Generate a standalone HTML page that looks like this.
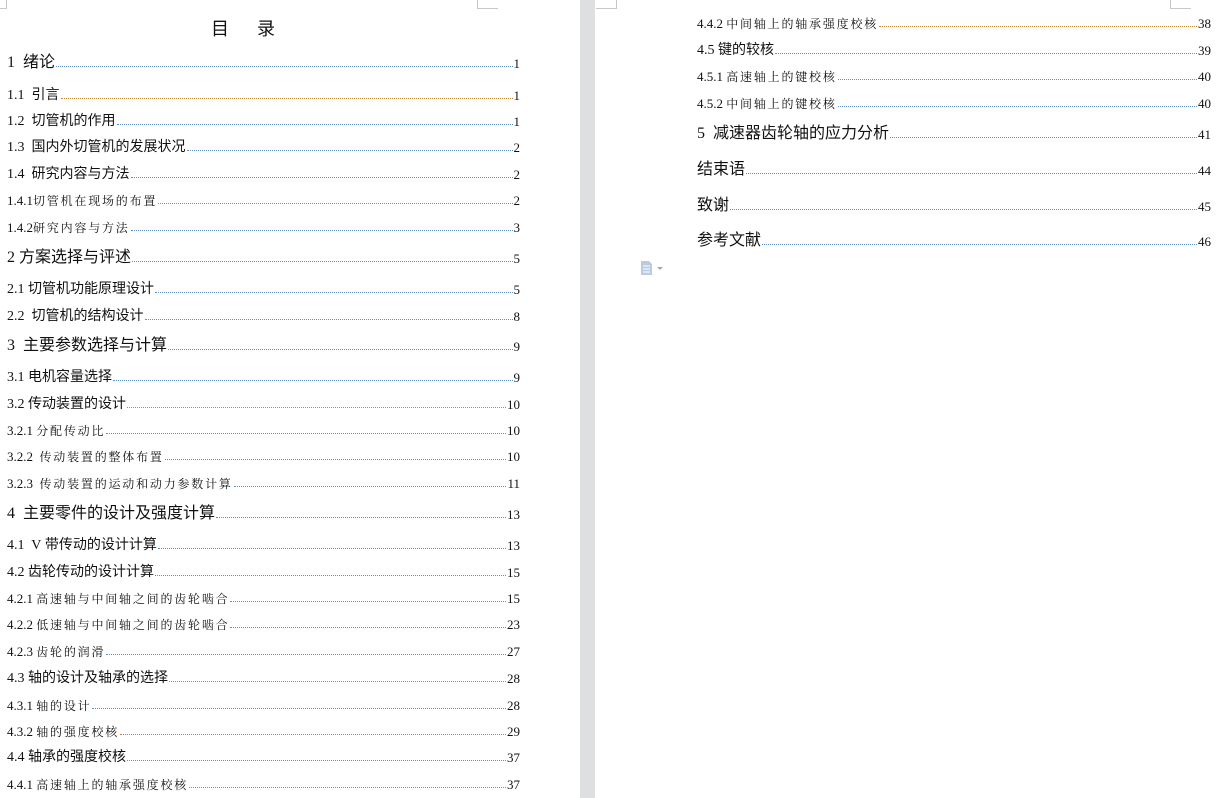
<!DOCTYPE html>
<html><head><meta charset="utf-8"><style>
body{margin:0;width:1227px;height:798px;background:#fff;position:relative;overflow:hidden;font-family:"Liberation Serif","Noto Sans CJK SC",serif;color:#111}
.gap{position:absolute;left:580px;top:0;width:15px;height:798px;background:#dedfe1}
.r{position:absolute;display:flex;align-items:flex-end;white-space:pre;height:20px}
.L{left:7px;width:513px}.R{left:697px;width:514px}
.t{font-family:"Liberation Serif","Noto Sans CJK SC",sans-serif;font-size:14px}
.t .c{font-family:"Noto Sans CJK SC",sans-serif}
.b{font-size:16px}
.s{font-size:13px}.s .c{font-family:"Noto Serif CJK SC",serif;letter-spacing:1.8px;font-size:12px}
.d{flex:1;border-bottom:1px dotted #5b8fc9;margin:0 1px 5px 1px}
.o .d{border-bottom-color:#c7872c}
.n{font-size:13px}
.corner{position:absolute;border-color:#c8c8c8;border-style:solid;width:20px;height:8px}
</style></head><body>
<div class="gap"></div>
<div class="corner" style="left:0;top:0;border-width:0 1px 1px 0;width:6px"></div>
<div class="corner" style="left:477px;top:0;border-width:0 0 1px 1px"></div>
<div class="corner" style="left:596px;top:0;border-width:0 1px 1px 0;width:20px"></div>
<div class="corner" style="left:1170px;top:0;border-width:0 0 1px 1px"></div>
<div style="position:absolute;left:211px;top:15px;font-family:'Noto Sans CJK SC',sans-serif;font-size:18px;letter-spacing:28px">目录</div>

<div class="r L t b" style="top:52px">1&nbsp; <span class="c">绪论</span><span class="d"></span><span class="n">1</span></div>
<div class="r L t o" style="top:84px">1.1&nbsp; <span class="c">引言</span><span class="d"></span><span class="n">1</span></div>
<div class="r L t" style="top:110px">1.2&nbsp; <span class="c">切管机的作用</span><span class="d"></span><span class="n">1</span></div>
<div class="r L t" style="top:136px">1.3&nbsp; <span class="c">国内外切管机的发展状况</span><span class="d"></span><span class="n">2</span></div>
<div class="r L t" style="top:163px">1.4&nbsp; <span class="c">研究内容与方法</span><span class="d"></span><span class="n">2</span></div>
<div class="r L t s o" style="top:189px">1.4.1<span class="c">切管机在现场的布置</span><span class="d"></span><span class="n">2</span></div>
<div class="r L t s" style="top:216px">1.4.2<span class="c">研究内容与方法</span><span class="d"></span><span class="n">3</span></div>
<div class="r L t b" style="top:247px">2&nbsp;<span class="c">方案选择与评述</span><span class="d"></span><span class="n">5</span></div>
<div class="r L t" style="top:278px">2.1&nbsp;<span class="c">切管机功能原理设计</span><span class="d"></span><span class="n">5</span></div>
<div class="r L t" style="top:305px">2.2&nbsp; <span class="c">切管机的结构设计</span><span class="d"></span><span class="n">8</span></div>
<div class="r L t b" style="top:335px">3&nbsp; <span class="c">主要参数选择与计算</span><span class="d"></span><span class="n">9</span></div>
<div class="r L t" style="top:366px">3.1&nbsp;<span class="c">电机容量选择</span><span class="d"></span><span class="n">9</span></div>
<div class="r L t o" style="top:393px">3.2&nbsp;<span class="c">传动装置的设计</span><span class="d"></span><span class="n">10</span></div>
<div class="r L t s" style="top:419px">3.2.1&nbsp;<span class="c">分配传动比</span><span class="d"></span><span class="n">10</span></div>
<div class="r L t s" style="top:445px">3.2.2&nbsp; <span class="c">传动装置的整体布置</span><span class="d"></span><span class="n">10</span></div>
<div class="r L t s" style="top:472px">3.2.3&nbsp; <span class="c">传动装置的运动和动力参数计算</span><span class="d"></span><span class="n">11</span></div>
<div class="r L t b" style="top:503px">4&nbsp; <span class="c">主要零件的设计及强度计算</span><span class="d"></span><span class="n">13</span></div>
<div class="r L t" style="top:534px">4.1&nbsp; V&nbsp;<span class="c">带传动的设计计算</span><span class="d"></span><span class="n">13</span></div>
<div class="r L t" style="top:561px">4.2&nbsp;<span class="c">齿轮传动的设计计算</span><span class="d"></span><span class="n">15</span></div>
<div class="r L t s" style="top:587px">4.2.1&nbsp;<span class="c">高速轴与中间轴之间的齿轮啮合</span><span class="d"></span><span class="n">15</span></div>
<div class="r L t s" style="top:613px">4.2.2&nbsp;<span class="c">低速轴与中间轴之间的齿轮啮合</span><span class="d"></span><span class="n">23</span></div>
<div class="r L t s" style="top:640px">4.2.3&nbsp;<span class="c">齿轮的润滑</span><span class="d"></span><span class="n">27</span></div>
<div class="r L t o" style="top:667px">4.3&nbsp;<span class="c">轴的设计及轴承的选择</span><span class="d"></span><span class="n">28</span></div>
<div class="r L t s" style="top:694px">4.3.1&nbsp;<span class="c">轴的设计</span><span class="d"></span><span class="n">28</span></div>
<div class="r L t s o" style="top:720px">4.3.2&nbsp;<span class="c">轴的强度校核</span><span class="d"></span><span class="n">29</span></div>
<div class="r L t" style="top:746px">4.4&nbsp;<span class="c">轴承的强度校核</span><span class="d"></span><span class="n">37</span></div>
<div class="r L t s o" style="top:773px">4.4.1&nbsp;<span class="c">高速轴上的轴承强度校核</span><span class="d"></span><span class="n">37</span></div>

<div class="r R t s o" style="top:12px">4.4.2&nbsp;<span class="c">中间轴上的轴承强度校核</span><span class="d"></span><span class="n">38</span></div>
<div class="r R t" style="top:39px">4.5&nbsp;<span class="c">键的较核</span><span class="d"></span><span class="n">39</span></div>
<div class="r R t s" style="top:65px">4.5.1&nbsp;<span class="c">高速轴上的键校核</span><span class="d"></span><span class="n">40</span></div>
<div class="r R t s" style="top:92px">4.5.2&nbsp;<span class="c">中间轴上的键校核</span><span class="d"></span><span class="n">40</span></div>
<div class="r R t b" style="top:123px">5&nbsp; <span class="c">减速器齿轮轴的应力分析</span><span class="d"></span><span class="n">41</span></div>
<div class="r R t b" style="top:159px"><span class="c">结束语</span><span class="d"></span><span class="n">44</span></div>
<div class="r R t b" style="top:195px"><span class="c">致谢</span><span class="d"></span><span class="n">45</span></div>
<div class="r R t b" style="top:230px"><span class="c">参考文献</span><span class="d"></span><span class="n">46</span></div>

<svg style="position:absolute;left:640px;top:260px" width="28" height="16"><path d="M1 1h8l3 3v11H1z" fill="#b9cbe3"/><path d="M3 6h7M3 9h7M3 12h7" stroke="#fff"/><path d="M17 7l3 3 3-3z" fill="#aaa"/></svg>
</body></html>
